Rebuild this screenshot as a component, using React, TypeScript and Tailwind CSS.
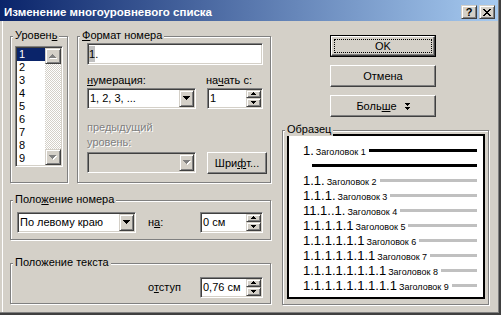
import React from "react";

const sunken =
  "border border-t-[#808080] border-l-[#808080] border-b-white border-r-white shadow-[inset_1px_1px_0_#404040,inset_-1px_-1px_0_#d4d0c8]";
const raised =
  "border border-t-white border-l-white border-b-[#404040] border-r-[#404040] shadow-[inset_-1px_-1px_0_#808080] bg-[#d4d0c8]";
const sbtn =
  "border border-t-[#d4d0c8] border-l-[#d4d0c8] border-b-[#404040] border-r-[#404040] shadow-[inset_1px_1px_0_#fff,inset_-1px_-1px_0_#808080] bg-[#d4d0c8]";
const disabledText = "text-[#808080] [text-shadow:1px_1px_0_#fff]";

function Arrow({
  up = false,
  size = 7,
  disabled = false,
}: {
  up?: boolean;
  size?: number;
  disabled?: boolean;
}) {
  const rows = (size + 1) / 2;
  const shape = (c: string, dx: number, dy: number, k: string) =>
    Array.from({ length: rows }, (_, i) => (
      <rect
        key={k + i}
        x={i + dx}
        y={(up ? rows - 1 - i : i) + dy}
        width={size - 2 * i}
        height={1}
        fill={c}
      />
    ));
  return (
    <svg width={size + 1} height={rows + 1} shapeRendering="crispEdges" className="block">
      {disabled && shape("#fff", 1, 1, "s")}
      {shape(disabled ? "#808080" : "#000", 0, 0, "m")}
    </svg>
  );
}

function Group({
  label,
  className = "",
  children,
}: {
  label: React.ReactNode;
  className?: string;
  children?: React.ReactNode;
}) {
  return (
    <div
      className={`relative border border-[#808080] shadow-[inset_1px_1px_0_#fff,1px_1px_0_#fff] ${className}`}
    >
      <span className="absolute left-[2px] top-[-8px] whitespace-nowrap bg-[#d4d0c8] px-[2px] leading-[13px]">
        {label}
      </span>
      {children}
    </div>
  );
}

function Combo({
  className = "",
  text = "",
  disabled = false,
}: {
  className?: string;
  text?: string;
  disabled?: boolean;
}) {
  return (
    <div
      className={`${sunken} flex h-[21px] p-[1px] ${disabled ? "bg-[#d4d0c8]" : "bg-white"} ${className}`}
    >
      <div className="flex flex-1 items-center overflow-hidden whitespace-nowrap pl-[1px]">{text}</div>
      <div className={`${sbtn} flex h-full w-[15px] items-center justify-center`}>
        <Arrow disabled={disabled} />
      </div>
    </div>
  );
}

function Spinner({ className = "", value }: { className?: string; value: string }) {
  return (
    <div className={`${sunken} flex h-[21px] bg-white p-[1px] ${className}`}>
      <div className="flex flex-1 items-center whitespace-nowrap pl-[1px]">{value}</div>
      <div className="flex w-[15px] flex-col">
        <div className={`${sbtn} flex h-[8px] items-center justify-center`}>
          <Arrow up size={5} />
        </div>
        <div className={`${sbtn} flex flex-1 items-center justify-center`}>
          <Arrow size={5} />
        </div>
      </div>
    </div>
  );
}

function Btn({ className = "", children }: { className?: string; children: React.ReactNode }) {
  return (
    <div className={`${raised} flex h-[22px] items-center justify-center whitespace-nowrap ${className}`}>
      {children}
    </div>
  );
}

function MoreGlyph() {
  return (
    <svg width="5" height="7" shapeRendering="crispEdges" className="ml-[8px] block">
      <rect x="0" y="0" width="5" height="1" fill="#000" />
      <rect x="1" y="1" width="3" height="1" fill="#000" />
      <rect x="2" y="2" width="1" height="1" fill="#000" />
      <rect x="0" y="4" width="5" height="1" fill="#000" />
      <rect x="1" y="5" width="3" height="1" fill="#000" />
      <rect x="2" y="6" width="1" height="1" fill="#000" />
    </svg>
  );
}

function CloseGlyph() {
  return (
    <svg width="8" height="7" shapeRendering="crispEdges" className="block">
      {Array.from({ length: 7 }, (_, i) => (
        <g key={i}>
          <rect x={i} y={i} width="2" height="1" fill="#000" />
          <rect x={6 - i} y={i} width="2" height="1" fill="#000" />
        </g>
      ))}
    </svg>
  );
}

const previewRows: { num: string; n: number }[] = [
  { num: "1.1.", n: 2 },
  { num: "1.1.1.", n: 3 },
  { num: "11.1..1.", n: 4 },
  { num: "1.1.1.1.1", n: 5 },
  { num: "1.1.1.1.1.1", n: 6 },
  { num: "1.1.1.1.1.1.1", n: 7 },
  { num: "1.1.1.1.1.1.1.1", n: 8 },
  { num: "1.1.1.1.1.1.1.1.1", n: 9 },
];

function PreviewRow({ num, n, dark = false }: { num: string; n: number; dark?: boolean }) {
  return (
    <div className="flex h-[15px] items-center">
      <span className="whitespace-nowrap text-[13px] leading-[15px]">
        {num}
        <span className="ml-[2px] text-[9px] leading-[9px]">Заголовок {n}</span>
      </span>
      <div className={`ml-[3px] h-[3px] flex-1 ${dark ? "bg-black" : "bg-[#c0c0c0]"}`} />
    </div>
  );
}

export default function App() {
  return (
    <div className="relative flex h-[315px] w-[501px] flex-col overflow-hidden bg-[#d4d0c8] font-['Liberation_Sans',Arial,sans-serif] text-[11px] leading-[13px] text-black shadow-[inset_-2px_-2px_0_#404040,inset_-3px_-3px_0_#808080,inset_2px_0_0_#d4d0c8,inset_3px_0_0_#fff]">
      {/* Title bar */}
      <div className="mr-[3px] flex h-[21px] shrink-0 items-end justify-between bg-[linear-gradient(to_right,#0a246a,#a6caf0)] pb-[2px] pl-[4px] pr-[3px]">
        <span className="whitespace-nowrap text-[11.5px] font-bold leading-[13px] text-white">
          Изменение многоуровневого списка
        </span>
        <div className="flex gap-[2px]">
          <div className={`${sbtn} flex h-[14px] w-[16px] items-center justify-center text-[11px] font-bold leading-none`}>
            ?
          </div>
          <div className={`${sbtn} flex h-[14px] w-[16px] items-center justify-center`}>
            <CloseGlyph />
          </div>
        </div>
      </div>

      {/* Body */}
      <div className="flex pl-[10px]">
        {/* Left column */}
        <div className="flex w-[261px] flex-col pt-[15px]">
          <div className="flex h-[147px] gap-[9px]">
            <Group
              label={
                <>
                  Уровен<u>ь</u>
                </>
              }
              className="w-[58px] pl-[4px] pt-[9px]"
            >
              <div className={`${sunken} flex h-[121px] w-[48px] bg-white p-[1px]`}>
                <div className="flex w-[28px] flex-col">
                  {[1, 2, 3, 4, 5, 6, 7, 8, 9].map((n) => (
                    <div
                      key={n}
                      className={`h-[13px] pl-[2px] leading-[13px] ${n === 1 ? "bg-[#0a246a] text-white" : ""}`}
                    >
                      {n}
                    </div>
                  ))}
                </div>
                <div className="flex w-[16px] flex-col">
                  <div className={`${sbtn} flex h-[16px] items-center justify-center`}>
                    <Arrow up disabled />
                  </div>
                  <div className="flex-1 bg-[image:repeating-conic-gradient(#d4d0c8_0%_25%,#fff_0%_50%)] bg-[length:2px_2px]" />
                  <div className={`${sbtn} flex h-[16px] items-center justify-center`}>
                    <Arrow disabled />
                  </div>
                </div>
              </div>
            </Group>

            <Group
              label={
                <>
                  <u>Ф</u>ормат номера
                </>
              }
              className="w-[194px] pl-[9px] pt-[6px]"
            >
              <div className={`${sunken} flex h-[22px] w-[176px] items-center bg-white px-[1px]`}>
                <span className="inline-block bg-[#c0c0c0] leading-[16px]">1</span>
                <span>.</span>
              </div>
              <div className="mt-[9px] flex whitespace-nowrap">
                <span className="w-[119px]">
                  <u>н</u>умерация:
                </span>
                <span>
                  на<u>ч</u>ать с:
                </span>
              </div>
              <div className="mt-[1px] flex gap-[11px]">
                <Combo className="w-[109px]" text="1, 2, 3, ..." />
                <Spinner className="w-[56px]" value="1" />
              </div>
              <div className={`mt-[11px] leading-[15px] ${disabledText}`}>
                предыдущий
                <br />
                уровень:
              </div>
              <div className="mt-[2px] flex gap-[11px]">
                <Combo className="w-[109px]" disabled />
                <Btn className="w-[60px]">
                  Шри<u>ф</u>т...
                </Btn>
              </div>
            </Group>
          </div>

          <Group
            label={
              <>
                Поло<u>ж</u>ение номера
              </>
            }
            className="mt-[17px] h-[40px] pl-[6px] pt-[11px]"
          >
            <div className="flex h-[21px] items-center">
              <Combo className="w-[119px]" text="По левому краю" />
              <span className="ml-[12px] w-[52px]">
                н<u>а</u>:
              </span>
              <Spinner className="w-[63px]" value="0 см" />
            </div>
          </Group>

          <Group label="Положение текста" className="mt-[23px] h-[41px] pl-[137px] pt-[13px]">
            <div className="flex h-[21px] items-center">
              <span className="w-[52px]">
                о<u>т</u>ступ
              </span>
              <Spinner className="w-[63px]" value="0,76 см" />
            </div>
          </Group>
        </div>

        {/* Right column */}
        <div className="ml-[11px] flex w-[207px] flex-col pt-[14px]">
          <div className="ml-[48px] h-[22px] w-[106px] border border-black">
            <div className={`${raised} relative flex h-full items-center justify-center`}>
              <span className="absolute inset-[2px] border border-dotted border-black" />
              OK
            </div>
          </div>
          <Btn className="ml-[48px] mt-[8px] w-[106px]">Отмена</Btn>
          <Btn className="ml-[48px] mt-[8px] w-[106px]">
            Боль<u>ш</u>е
            <MoreGlyph />
          </Btn>

          <Group label="Образец" className="mt-[13px] h-[175px] w-[207px] pl-[4px] pt-[3px]">
            <div className="h-[165px] w-[198px] border-2 border-black bg-white pl-[14px] pr-[6px] pt-[7px]">
              <PreviewRow num="1." n={1} dark />
              <div className="flex h-[15px] items-center">
                <div className="ml-[9px] h-[3px] flex-1 bg-black" />
              </div>
              {previewRows.map((r) => (
                <PreviewRow key={r.n} num={r.num} n={r.n} />
              ))}
            </div>
          </Group>
        </div>
      </div>
    </div>
  );
}
